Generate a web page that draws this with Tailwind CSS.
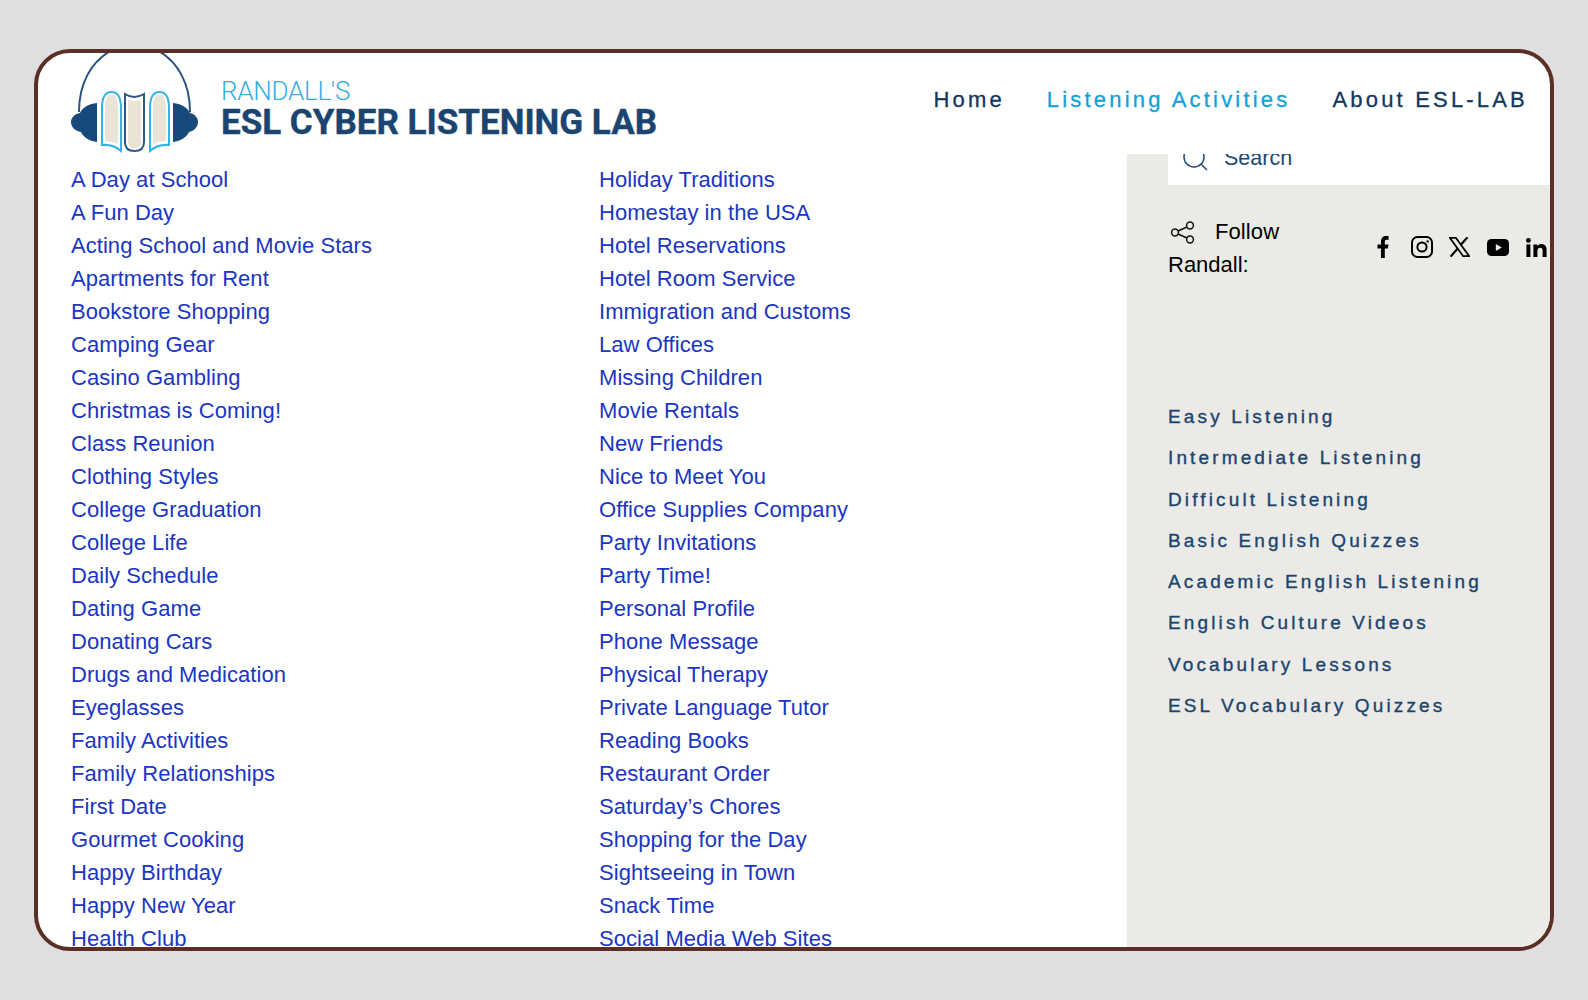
<!DOCTYPE html>
<html lang="en">
<head>
    <meta charset="UTF-8">
    <title>Listening Activities</title>
    <script src="https://cdn.jsdelivr.net/npm/@tailwindcss/browser@4"></script>
</head>
<body class="bg-[#dfdfdf] h-[1000px] overflow-hidden font-['Liberation_Sans',sans-serif]">
    <div class="mx-[34px] mt-[49px] h-[902px] w-[1520px] border-[4px] border-[#5b2f25] rounded-[36px] bg-white overflow-hidden flex flex-col">
        <!-- header -->
        <header class="h-[101px] shrink-0 flex items-start">
            <svg class="ml-[32px] shrink-0" width="130" height="105" viewBox="70 53 130 105">
                <path d="M79 112 C79 85 90 60 116 48 M153 48 C179 60 190 85 190 112" fill="none" stroke="#2a5480" stroke-width="2"/>
                <path d="M97 103 C88 104 82 108 80 113 C74 114 71 118 71 122 C71 127 75 131 81 132 C83 137 89 141 97 142 Z" fill="#17497a"/>
                <path d="M173 103 C182 104 188 108 190 113 C195 114 198 118 198 122 C198 127 194 131 189 132 C187 137 181 141 173 142 Z" fill="#17497a"/>
                <path d="M102 145 V108 Q102 92 111.500 92 Q121 92 121 108 V151 Q113 144 102 145 Z" fill="#fff" stroke="#35b3e3" stroke-width="2"/>
                <path d="M105 141 V108 Q105 95 111.500 95 Q118 95 118 108 V144 Q112 141 105 141 Z" fill="#e9e4d6"/>
                <path d="M169 145 V108 Q169 92 159.500 92 Q150 92 150 108 V151 Q158 144 169 145 Z" fill="#fff" stroke="#35b3e3" stroke-width="2"/>
                <path d="M166 141 V108 Q166 95 159.500 95 Q153 95 153 108 V144 Q159 141 166 141 Z" fill="#e9e4d6"/>
                <path d="M125 94 Q134 100 144 94 V142 Q144 151 134.500 151 Q125 151 125 142 Z" fill="#fff" stroke="#2f5688" stroke-width="2"/>
                <path d="M128 100 Q134 102 141 100 V142 Q141 148 134.500 148 Q128 148 128 142 Z" fill="#e9e4d6"/>
            </svg>
            <div class="ml-[21px] mt-[25px] w-[450px] shrink-0">
                <div class="font-['Roboto',sans-serif] font-light text-[26px] leading-[27px] text-[#35ade0] tracking-[-0.01em]">RANDALL'S</div>
                <div class="font-['Roboto',sans-serif] font-bold text-[35px] leading-[36px] text-[#1b4570] whitespace-nowrap [-webkit-text-stroke:0.4px_#1b4570]">ESL CYBER LISTENING LAB</div>
            </div>
            <nav class="ml-auto mr-[22px] mt-[34px] flex gap-[42px] text-[22px] leading-[26px] tracking-[0.145em] whitespace-nowrap [-webkit-text-stroke:0.3px]">
                <a class="text-[#12365c]">Home</a>
                <a class="text-[#13a0d8]">Listening Activities</a>
                <a class="text-[#12365c]">About ESL-LAB</a>
            </nav>
        </header>

        <div class="flex flex-1 min-h-0">
            <!-- activity lists -->
            <main class="w-[1089px] shrink-0 pl-[33px] pt-[9px] grid grid-cols-[528px_1fr] text-[22px] leading-[33px] tracking-[0.05px] text-[#1a36c2]">
                <ul>
                    <li>A Day at School</li>
                    <li>A Fun Day</li>
                    <li>Acting School and Movie Stars</li>
                    <li>Apartments for Rent</li>
                    <li>Bookstore Shopping</li>
                    <li>Camping Gear</li>
                    <li>Casino Gambling</li>
                    <li>Christmas is Coming!</li>
                    <li>Class Reunion</li>
                    <li>Clothing Styles</li>
                    <li>College Graduation</li>
                    <li>College Life</li>
                    <li>Daily Schedule</li>
                    <li>Dating Game</li>
                    <li>Donating Cars</li>
                    <li>Drugs and Medication</li>
                    <li>Eyeglasses</li>
                    <li>Family Activities</li>
                    <li>Family Relationships</li>
                    <li>First Date</li>
                    <li>Gourmet Cooking</li>
                    <li>Happy Birthday</li>
                    <li>Happy New Year</li>
                    <li>Health Club</li>
                </ul>
                <ul>
                    <li>Holiday Traditions</li>
                    <li>Homestay in the USA</li>
                    <li>Hotel Reservations</li>
                    <li>Hotel Room Service</li>
                    <li>Immigration and Customs</li>
                    <li>Law Offices</li>
                    <li>Missing Children</li>
                    <li>Movie Rentals</li>
                    <li>New Friends</li>
                    <li>Nice to Meet You</li>
                    <li>Office Supplies Company</li>
                    <li>Party Invitations</li>
                    <li>Party Time!</li>
                    <li>Personal Profile</li>
                    <li>Phone Message</li>
                    <li>Physical Therapy</li>
                    <li>Private Language Tutor</li>
                    <li>Reading Books</li>
                    <li>Restaurant Order</li>
                    <li>Saturday’s Chores</li>
                    <li>Shopping for the Day</li>
                    <li>Sightseeing in Town</li>
                    <li>Snack Time</li>
                    <li>Social Media Web Sites</li>
                </ul>
            </main>

            <!-- sidebar -->
            <aside class="flex-1 bg-[#ebeae6] pl-[41px] overflow-hidden">
                <div class="h-[31px] bg-white overflow-hidden flex items-start">
                    <svg class="ml-[15px] mt-[-8px] shrink-0" width="25" height="25" viewBox="0 0 25 25" fill="none" stroke="#1d4a73" stroke-width="1.5"><circle cx="11" cy="11" r="10"/><path d="M18 18 L24 24"/></svg>
                    <span class="ml-[16px] mt-[-9px] text-[21.5px] leading-[26px] text-[#1d4a73]">Search</span>
                </div>
                <div class="mt-[30px] h-[66px] flex items-start">
                    <div class="w-[190px] shrink-0 text-[22px] leading-[33px] text-black">
                        <svg class="inline-block align-[-5px] ml-[2px] mr-[19px]" width="26" height="23" viewBox="0 0 26 23" fill="none" stroke="#111" stroke-width="1.5"><circle cx="20" cy="4.500" r="3.400"/><circle cx="20" cy="18.500" r="3.400"/><circle cx="5" cy="11.500" r="3.400"/><path d="M8.100 10 L16.900 6 M8.100 13 L16.900 17"/></svg><span class="tracking-[0.1px]">Follow</span>
                        <br>Randall:
                    </div>
                    <div class="ml-[19px] mt-[21px] flex items-center gap-[20px] shrink-0">
                        <svg width="12" height="22" viewBox="0 0 12 22" fill="#000"><path d="M4 22 V12.500 H0.500 V8.600 H4 V5.600 C4 2 6 0 9.200 0 H11.600 V3.800 H9.800 C8.300 3.800 7.800 4.600 7.800 5.900 V8.600 H11.500 L10.900 12.500 H7.800 V22 Z"/></svg>
                        <svg class="ml-[2px]" width="22" height="22" viewBox="0 0 22 22" fill="none" stroke="#000" stroke-width="2"><rect x="1" y="1" width="20" height="20" rx="5.500"/><circle cx="11" cy="11" r="4.600"/><circle cx="16.600" cy="5.400" r="1.200" fill="#000" stroke="none"/></svg>
                        <svg class="ml-[-4px]" width="21" height="20" viewBox="0 0 21 20"><path d="M0.800 0.800 H6.800 L20.200 19.200 H14.200 Z" fill="none" stroke="#000" stroke-width="1.800"/><path d="M18.500 0.300 L11.600 8 M8.900 11.200 L1.600 19.600" stroke="#000" stroke-width="2.200"/></svg>
                        <svg class="ml-[-3px]" width="22" height="17" viewBox="0 0 22 17"><rect width="22" height="17" rx="4.500" fill="#000"/><path d="M8.800 5 L14.800 8.500 L8.800 12 Z" fill="#ebeae6"/></svg>
                        <svg class="ml-[-3px]" width="21" height="19" viewBox="0 0 21 19" fill="#000"><circle cx="2.400" cy="2.400" r="2.400"/><rect x="0.400" y="6.400" width="4" height="12.600"/><path d="M7.400 6.400 H11.200 V8.200 C12 6.900 13.400 6.100 15.200 6.100 C19 6.100 20.600 8.400 20.600 12 V19 H16.600 V12.800 C16.600 10.800 15.900 9.700 14.300 9.700 C12.500 9.700 11.400 10.900 11.400 12.900 V19 H7.400 Z"/></svg>
                    </div>
                </div>
                <ul class="mt-[115px] text-[19px] leading-[41.3px] tracking-[0.165em] text-[#1a456f] whitespace-nowrap [-webkit-text-stroke:0.35px]">
                    <li>Easy Listening</li>
                    <li>Intermediate Listening</li>
                    <li>Difficult Listening</li>
                    <li>Basic English Quizzes</li>
                    <li>Academic English Listening</li>
                    <li>English Culture Videos</li>
                    <li>Vocabulary Lessons</li>
                    <li>ESL Vocabulary Quizzes</li>
                </ul>
            </aside>
        </div>
    </div>
</body>
</html>
